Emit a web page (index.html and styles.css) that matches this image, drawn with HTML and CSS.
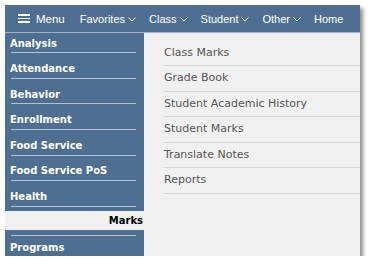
FILE: index.html
```html
<!DOCTYPE html>
<html lang="en">

<head>
    <meta charset="UTF-8">
    <title>Marks Menu</title>
    <link rel="stylesheet" href="styles.css">
</head>

<body>
    <div class="app">
        <div class="topbar">
            <div class="menu-btn">
                <span class="burger"><i></i><i></i><i></i></span>
                Menu
            </div>
            <div class="nav-item">Favorites <svg class="chev" viewBox="0 0 8 5"><path d="M0.5 0.5 L4 4 L7.5 0.5" /></svg></div>
            <div class="nav-item">Class <svg class="chev" viewBox="0 0 8 5"><path d="M0.5 0.5 L4 4 L7.5 0.5" /></svg></div>
            <div class="nav-item">Student <svg class="chev" viewBox="0 0 8 5"><path d="M0.5 0.5 L4 4 L7.5 0.5" /></svg></div>
            <div class="nav-item">Other <svg class="chev" viewBox="0 0 8 5"><path d="M0.5 0.5 L4 4 L7.5 0.5" /></svg></div>
            <div class="nav-item">Home</div>
        </div>
        <div class="main">
            <ul class="side">
                <li>Analysis</li>
                <li>Attendance</li>
                <li>Behavior</li>
                <li>Enrollment</li>
                <li>Food Service</li>
                <li>Food Service PoS</li>
                <li>Health</li>
                <li class="active"><span>Marks</span></li>
                <li>Programs</li>
            </ul>
            <ul class="content">
                <li>Class Marks</li>
                <li>Grade Book</li>
                <li>Student Academic History</li>
                <li>Student Marks</li>
                <li>Translate Notes</li>
                <li>Reports</li>
            </ul>
        </div>
    </div>
</body>

</html>
```

FILE: styles.css
```css
body {
    margin: 0;
    padding: 0;
    background: white;
}

.app {
    margin: 5px 0 0 5px;
    width: 355px;
    height: 251px;
    display: flex;
    flex-direction: column;
    background: #4e6f92;
    box-shadow: 3px 3px 4px rgba(0, 0, 0, 0.45);
    overflow: hidden;
}

.topbar {
    flex-shrink: 0;
    height: 27px;
    display: flex;
    align-items: center;
    padding-left: 13px;
    font-family: "Liberation Sans", Arial, sans-serif;
    font-size: 11px;
    color: white;
    border-bottom: 1px solid #9fb2c6;
}

.menu-btn {
    display: flex;
    align-items: center;
    margin-right: 15px;
    font-size: 11.5px;
}

.burger {
    display: flex;
    flex-direction: column;
    gap: 2px;
    width: 12px;
    margin-right: 6px;
}

.burger i {
    display: block;
    height: 1.6px;
    background: white;
}

.nav-item {
    display: flex;
    align-items: center;
    margin-right: 13px;
}

.chev {
    width: 8px;
    height: 5px;
    margin-left: 3px;
    margin-top: 1px;
    fill: none;
    stroke: white;
    stroke-width: 0.9;
}

.main {
    flex: 1;
    display: flex;
    min-height: 0;
}

.side {
    list-style: none;
    margin: 0;
    padding: 0;
    width: 139px;
    flex-shrink: 0;
    font-family: "DejaVu Sans", Verdana, sans-serif;
    font-size: 10px;
    font-weight: bold;
    color: white;
}

.side li {
    padding: 8.8px 0 0 5px;
    line-height: 13px;
}

.side li:first-child {
    padding-top: 3.5px;
}

.side li::after {
    content: "";
    display: block;
    height: 1px;
    margin: 2.8px 8px 0 1px;
    background: #b3c1d0;
}

.side li.active {
    padding: 4px 0 0 0;
    color: black;
    text-align: right;
}

.side li.active span {
    display: block;
    height: 19px;
    line-height: 20px;
    padding-right: 1px;
    background: #f0f0f0;
}

.side li.active::after {
    margin: 5px 8px 0 6px;
}

.side li.active + li {
    padding-top: 5px;
}

.content {
    list-style: none;
    margin: 0;
    padding: 7.5px 0 0 20px;
    flex: 1;
    background: #f0f0f0;
    font-family: "DejaVu Sans", Verdana, sans-serif;
    font-size: 11px;
    color: #555;
}

.content li {
    line-height: 24.6px;
    border-bottom: 1px solid #d6d6d6;
}
```
